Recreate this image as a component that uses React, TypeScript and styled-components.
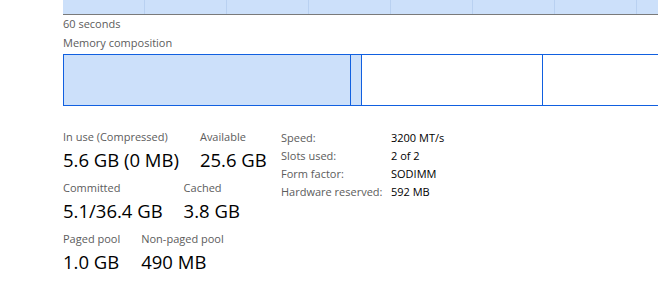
import React from "react";
import styled, { createGlobalStyle } from "styled-components";

const GlobalStyle = createGlobalStyle`
  html, body {
    margin: 0;
    padding: 0;
    background: #ffffff;
    overflow: hidden;
  }
  body {
    font-family: "Segoe UI", "Open Sans", "Noto Sans", sans-serif;
    color: #000;
  }
`;

const Panel = styled.div`
  width: 680px;
  padding-left: 63px;
  display: flex;
  flex-direction: column;
`;

const Graph = styled.div`
  height: 14px;
  border-bottom: 1px solid #7a7a7a;
  background-color: #cce0fa;
  background-image: repeating-linear-gradient(
    to right,
    transparent 0,
    transparent 81px,
    #b9d1f1 81px,
    #b9d1f1 82px
  );
`;

const Caption = styled.div<{ $top?: number }>`
  font-size: 11px;
  line-height: 16px;
  color: #5c5c5c;
  margin-top: ${(p) => p.$top ?? 0}px;
`;

const Composition = styled.div`
  margin-top: 3px;
  height: 50px;
  display: flex;
  border: 1px solid #1160e0;
  border-right: none;
`;

const Segment = styled.div<{ $w?: number; $filled?: boolean }>`
  flex: ${(p) => (p.$w ? `0 0 ${p.$w}px` : "1 1 auto")};
  background: ${(p) => (p.$filled ? "#cce0fa" : "#ffffff")};
  border-right: ${(p) => (p.$w ? "1px solid #1160e0" : "none")};
`;

const Details = styled.div`
  display: flex;
  margin-top: 23px;
`;

const Stats = styled.div`
  width: 218px;
  display: flex;
  flex-direction: column;
  gap: 8px;
`;

const StatRow = styled.div`
  display: flex;
  gap: 21px;
`;

const Stat = styled.div`
  display: flex;
  flex-direction: column;
  gap: 3px;
`;

const Label = styled.div`
  font-size: 11px;
  line-height: 16px;
  color: #5c5c5c;
  white-space: nowrap;
`;

const Value = styled.div`
  font-size: 18.5px;
  line-height: 24px;
  color: #000;
  white-space: nowrap;
`;

const Specs = styled.div`
  display: grid;
  grid-template-columns: 110px auto;
  grid-auto-rows: 18px;
  font-size: 11px;
  line-height: 18px;
`;

const SpecName = styled.div`
  color: #5c5c5c;
  white-space: nowrap;
`;

const SpecValue = styled.div`
  color: #000;
  white-space: nowrap;
`;

const statRows = [
  [
    { label: "In use (Compressed)", value: "5.6 GB (0 MB)" },
    { label: "Available", value: "25.6 GB" },
  ],
  [
    { label: "Committed", value: "5.1/36.4 GB" },
    { label: "Cached", value: "3.8 GB" },
  ],
  [
    { label: "Paged pool", value: "1.0 GB" },
    { label: "Non-paged pool", value: "490 MB" },
  ],
];

const specs = [
  ["Speed:", "3200 MT/s"],
  ["Slots used:", "2 of 2"],
  ["Form factor:", "SODIMM"],
  ["Hardware reserved:", "592 MB"],
];

export default function App() {
  return (
    <>
      <GlobalStyle />
      <Panel>
        <Graph />
        <Caption $top={1}>60 seconds</Caption>
        <Caption $top={3}>Memory composition</Caption>
        <Composition>
          {/* in use, modified, standby, free */}
          <Segment $w={286} $filled />
          <Segment $w={10} $filled />
          <Segment $w={180} />
          <Segment />
        </Composition>
        <Details>
          <Stats>
            {statRows.map((row, i) => (
              <StatRow key={i}>
                {row.map((s) => (
                  <Stat key={s.label}>
                    <Label>{s.label}</Label>
                    <Value>{s.value}</Value>
                  </Stat>
                ))}
              </StatRow>
            ))}
          </Stats>
          <Specs>
            {specs.map(([name, value]) => (
              <React.Fragment key={name}>
                <SpecName>{name}</SpecName>
                <SpecValue>{value}</SpecValue>
              </React.Fragment>
            ))}
          </Specs>
        </Details>
      </Panel>
    </>
  );
}
